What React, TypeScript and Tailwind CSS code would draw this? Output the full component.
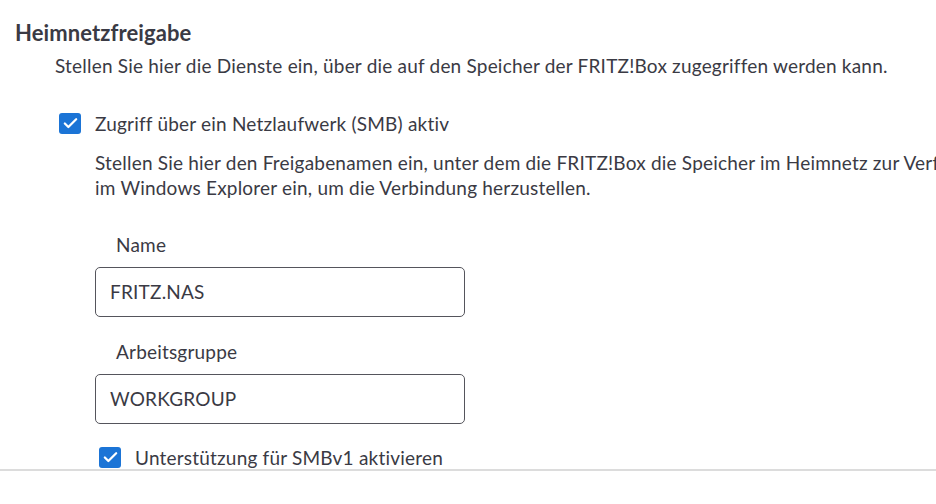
import { Check } from "lucide-react";

function Checkbox() {
  return (
    <span className="flex h-[21px] w-[22px] shrink-0 items-center justify-center rounded-[3px] bg-[#1b74d6]">
      <Check className="h-[17px] w-[17px] text-white" strokeWidth={3.2} />
    </span>
  );
}

function Field({ label, value }: { label: string; value: string }) {
  return (
    <div className="flex flex-col">
      <label className="pl-[21px] leading-[25px]">{label}</label>
      <div className="mt-[10px] flex h-[50px] w-[370px] items-center rounded-[5px] border border-[#55555c] px-[14px]">
        {value}
      </div>
    </div>
  );
}

export default function App() {
  return (
    <div
      className="h-[504px] w-[936px] overflow-hidden bg-white text-[19px] tracking-[0.2px] text-[#3a3a44]"
      style={{ fontFamily: "Lato, 'Noto Sans', sans-serif" }}
    >
      <div className="h-[471px] overflow-hidden border-b-2 border-[#dcdcdc]">
        <h2 className="pl-[15px] pt-[20px] text-[22px] font-bold leading-[26px] tracking-[0.1px]">
          Heimnetzfreigabe
        </h2>
        <p className="mt-[7px] whitespace-nowrap pl-[55px] leading-[25px]">
          Stellen Sie hier die Dienste ein, über die auf den Speicher der FRITZ!Box zugegriffen werden kann.
        </p>

        <div className="mt-[33px] flex items-center gap-[14px] pl-[59px]">
          <Checkbox />
          <span className="leading-[25px]">Zugriff über ein Netzlaufwerk (SMB) aktiv</span>
        </div>

        <div className="pl-[95px]">
          <p className="mt-[14px] whitespace-nowrap leading-[25px]">
            Stellen Sie hier den Freigabenamen ein, unter dem die FRITZ!Box die Speicher im Heimnetz zur Verfügung stellt.
            <br />
            im Windows Explorer ein, um die Verbindung herzustellen.
          </p>

          <div className="mt-[32px] flex flex-col gap-[22px]">
            <Field label="Name" value="FRITZ.NAS" />
            <Field label="Arbeitsgruppe" value="WORKGROUP" />
          </div>

          <div className="mt-[21px] flex items-center gap-[14px] pl-[4px]">
            <Checkbox />
            <span className="leading-[25px]">Unterstützung für SMBv1 aktivieren</span>
          </div>
        </div>
      </div>
    </div>
  );
}
